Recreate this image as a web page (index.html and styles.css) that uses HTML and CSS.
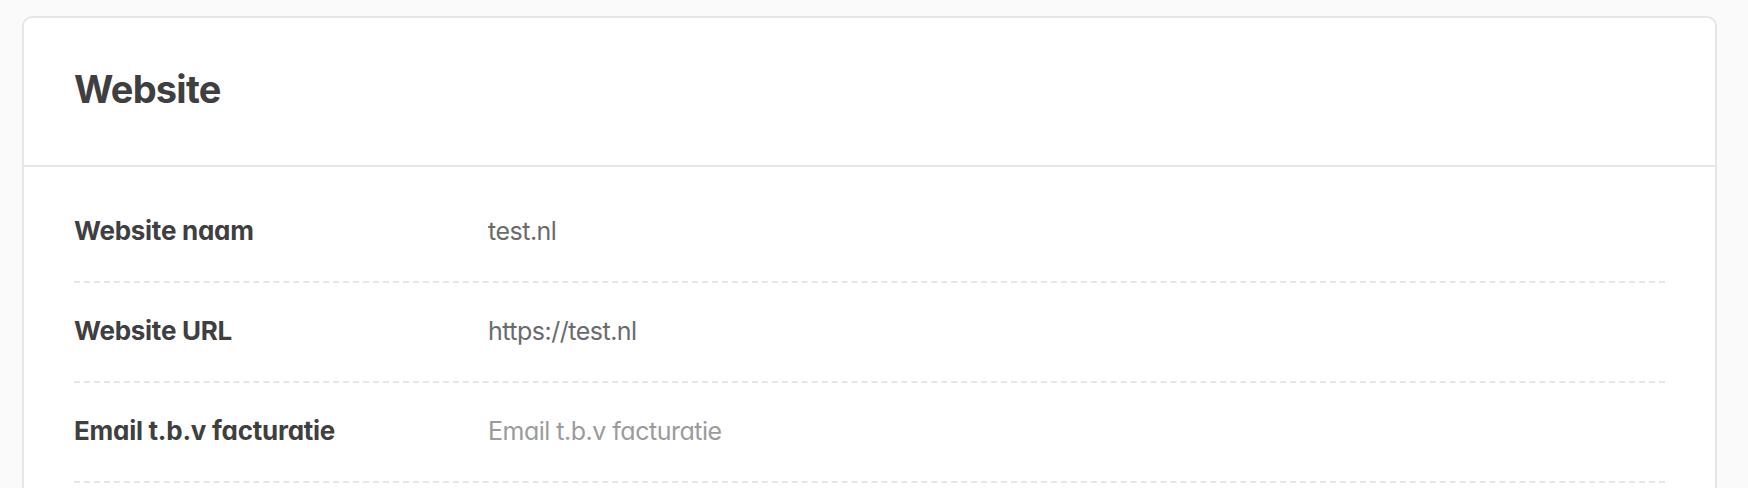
FILE: index.html
```html
<!DOCTYPE html>
<html lang="nl">
<head>
    <meta charset="UTF-8">
    <meta name="viewport" content="width=device-width, initial-scale=1.0">
    <title>Website</title>
    <link rel="stylesheet" href="styles.css">
</head>
<body>
    <div class="page">
        <div class="card">
            <div class="card-header">
                <h2>Website</h2>
            </div>
            <div class="card-body">
                <div class="field">
                    <label for="siteName">Website naam</label>
                    <input type="text" id="siteName" value="test.nl">
                </div>
                <div class="field">
                    <label for="siteUrl">Website URL</label>
                    <input type="text" id="siteUrl" value="https://test.nl">
                </div>
                <div class="field">
                    <label for="billingEmail">Email t.b.v facturatie</label>
                    <input type="email" id="billingEmail" placeholder="Email t.b.v facturatie">
                </div>
            </div>
        </div>
    </div>
</body>
</html>
```

FILE: styles.css
```css
body {
    margin: 0;
    background-color: #fafafa;
    font-family: Inter, "Noto Sans", sans-serif;
    font-feature-settings: "cv11";
    color: #3f3f41;
}
.page {
    padding: 16px 31px 0 22px;
}
.card {
    background-color: #fff;
    border: 2px solid #e6e6e6;
    border-radius: 10px;
}
.card-header {
    box-sizing: border-box;
    height: 149px;
    padding: 0 50px 5px;
    display: flex;
    align-items: center;
    border-bottom: 2px solid #e6e6e6;
}
.card-header h2 {
    margin: 0;
    font-size: 38px;
    font-weight: 700;
    letter-spacing: -0.02em;
}
.card-body {
    padding: 16px 50px 60px;
}
.field {
    box-sizing: border-box;
    display: flex;
    align-items: center;
    height: 100px;
    padding-bottom: 3px;
    border-bottom: 2px dashed #e6e6e6;
}
.field label {
    width: 414px;
    flex-shrink: 0;
    font-size: 26px;
    font-weight: 700;
    letter-spacing: -0.01em;
}
.field input {
    flex: 1;
    border: none;
    outline: none;
    padding: 0;
    background: transparent;
    font-family: inherit;
    font-feature-settings: "cv11";
    font-size: 25px;
    letter-spacing: -0.02em;
    color: #6b6b6d;
}
.field input::placeholder {
    color: #9b9b9b;
}
```
